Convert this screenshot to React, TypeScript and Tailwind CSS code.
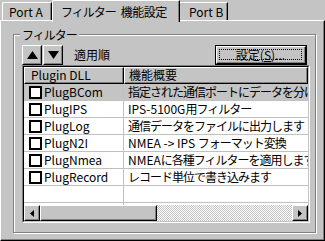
import React from "react";

const rows: [string, string, boolean][] = [
  ["PlugBCom", "指定された通信ポートにデータを分けます", true],
  ["PlugIPS", "IPS-5100G用フィルター", false],
  ["PlugLog", "通信データをファイルに出力します", false],
  ["PlugN2I", "NMEA -> IPS フォーマット変換", false],
  ["PlugNmea", "NMEAに各種フィルターを適用します", false],
  ["PlugRecord", "レコード単位で書き込みます", false],
];

function Mixed({ text }: { text: string }) {
  const parts = text.match(/[\x20-\x7e]+|[^\x20-\x7e]+/g) || [];
  return (
    <>
      {parts.map((p, i) =>
        /^[\x20-\x7e]+$/.test(p) ? (
          <span key={i} className="tracking-[0px] whitespace-pre">{p}</span>
        ) : (
          <span key={i} className="tracking-[-1px]">{p}</span>
        )
      )}
    </>
  );
}

function Raised({ className = "", children }: { className?: string; children?: React.ReactNode }) {
  return (
    <div className={"border border-t-white border-l-white border-r-black border-b-black " + className}>
      <div className="w-full h-full border border-t-[#c4c4c4] border-l-[#c4c4c4] border-r-[#808080] border-b-[#808080] flex items-center justify-center">
        {children}
      </div>
    </div>
  );
}

export default function App() {
  return (
    <div className="w-[325px] h-[241px] bg-[#c4c4c4] overflow-hidden font-['Noto_Sans_CJK_JP',sans-serif] text-[12px] leading-[12px] text-black">
      {/* tab strip */}
      <div className="relative z-10 flex h-[20px] items-end pl-[2px]">
        <div className="h-[18px] w-[50px] border-l border-t border-r border-l-white border-t-white border-r-black rounded-tl-[2px]">
          <div className="h-full border-r border-r-[#808080] flex items-center pl-[6px]">Port A</div>
        </div>
        <div className="h-[22px] -mb-[2px] w-[128px] bg-[#c4c4c4] border-l border-t border-r border-l-white border-t-white border-r-black rounded-tl-[2px]">
          <div className="h-full border-r border-r-[#808080] flex items-start pt-[5px] pl-[8px] whitespace-nowrap">
            <span className="tracking-[-1px]">フィルター</span>
            <span className="ml-[5px] tracking-[-0.5px]">機能設定</span>
          </div>
        </div>
        <div className="h-[18px] w-[48px] border-t border-r border-t-white border-r-black">
          <div className="h-full border-r border-r-[#808080] flex items-center pl-[9px]">Port B</div>
        </div>
      </div>

      {/* tab page */}
      <div className="w-[325px] h-[221px] border-l border-t border-r border-b border-l-white border-t-white border-r-black border-b-black">
        <div className="w-full h-full border-r border-b border-r-[#808080] border-b-[#808080] pl-[12px] pt-[13px]">
          {/* group box */}
          <div className="relative w-[303px] h-[199px] border border-[#808080] shadow-[inset_1px_1px_0_#fff,1px_1px_0_#fff] pl-[8px] pt-[10px]">
            <div className="absolute left-[6px] -top-[7px] bg-[#c4c4c4] px-[2px] h-[13px] flex items-center tracking-[-1px]">フィルター</div>

            {/* toolbar row */}
            <div className="flex h-[20px] items-center w-[288px]">
              <Raised className="w-[20px] h-[20px]">
                <svg width="11" height="8" viewBox="0 0 11 8"><polygon points="5.5,0 11,8 0,8" fill="#000" /></svg>
              </Raised>
              <Raised className="w-[20px] h-[20px] ml-[1px]">
                <svg width="11" height="8" viewBox="0 0 11 8"><polygon points="0,0 11,0 5.5,8" fill="#000" /></svg>
              </Raised>
              <span className="ml-[11px]">適用順</span>
              <div className="ml-auto mr-[3px] w-[92px] h-[20px] border border-black">
                <div className="w-full h-full border border-t-white border-l-white border-r-black border-b-black">
                  <div className="w-full h-full border-r border-b border-r-[#808080] border-b-[#808080] p-[2px]">
                    <div className="w-full h-full border border-dotted border-black flex items-center justify-center">
                      設定(<span className="underline">S</span>)...
                    </div>
                  </div>
                </div>
              </div>
            </div>

            {/* list view */}
            <div className="w-[288px] h-[158px] border border-t-[#808080] border-l-[#808080] border-r-white border-b-white">
              <div className="w-full h-full border border-t-black border-l-black border-r-[#c4c4c4] border-b-[#c4c4c4] bg-white flex flex-col overflow-hidden">
                {/* header */}
                <div className="flex h-[17px] shrink-0">
                  <div className="w-[100px] h-[17px] border border-t-white border-l-white border-r-black border-b-black bg-[#c4c4c4]">
                    <div className="h-full border-r border-b border-r-[#808080] border-b-[#808080] flex items-center pl-[6px]">Plugin DLL</div>
                  </div>
                  <div className="flex-1 h-[17px] border border-t-white border-l-white border-r-black border-b-black bg-[#c4c4c4]">
                    <div className="h-full border-r border-b border-r-[#808080] border-b-[#808080] flex items-center pl-[4px]">機能概要</div>
                  </div>
                </div>
                {/* rows */}
                {rows.map(([name, desc, sel]) => (
                  <div key={name} className={"flex h-[17px] shrink-0 border-b border-b-[#c0c0c0] " + (sel ? "bg-[#c4c4c4]" : "")}>
                    <div className="w-[100px] border-r border-r-[#c0c0c0] flex items-center pl-[5px]">
                      <div className="w-[13px] h-[13px] border-2 border-black bg-white shrink-0" />
                      <span className="ml-[2px]">{name}</span>
                    </div>
                    <div className="flex-1 flex items-center pl-[4px] whitespace-nowrap overflow-hidden">
                      <Mixed text={desc} />
                    </div>
                  </div>
                ))}
                <div className="flex h-[17px] shrink-0 border-b border-b-[#c0c0c0]">
                  <div className="w-[100px] border-r border-r-[#c0c0c0]" />
                  <div className="flex-1" />
                </div>
                <div className="flex-1 flex">
                  <div className="w-[100px] border-r border-r-[#c0c0c0]" />
                  <div className="flex-1" />
                </div>
                {/* horizontal scrollbar */}
                <div className="flex h-[16px] shrink-0 bg-[repeating-conic-gradient(#c4c4c4_0_25%,#ffffff_0_50%)] bg-[length:2px_2px]">
                  <Raised className="w-[16px] h-[16px] bg-[#c4c4c4]">
                    <svg width="4" height="7" viewBox="0 0 4 7"><polygon points="4,0 4,7 0,3.5" fill="#000" /></svg>
                  </Raised>
                  <Raised className="w-[117px] h-[16px] bg-[#c4c4c4]" />
                  <div className="flex-1" />
                  <Raised className="w-[16px] h-[16px] bg-[#c4c4c4]">
                    <svg width="4" height="7" viewBox="0 0 4 7"><polygon points="0,0 4,3.5 0,7" fill="#000" /></svg>
                  </Raised>
                </div>
              </div>
            </div>
          </div>
        </div>
      </div>
    </div>
  );
}
